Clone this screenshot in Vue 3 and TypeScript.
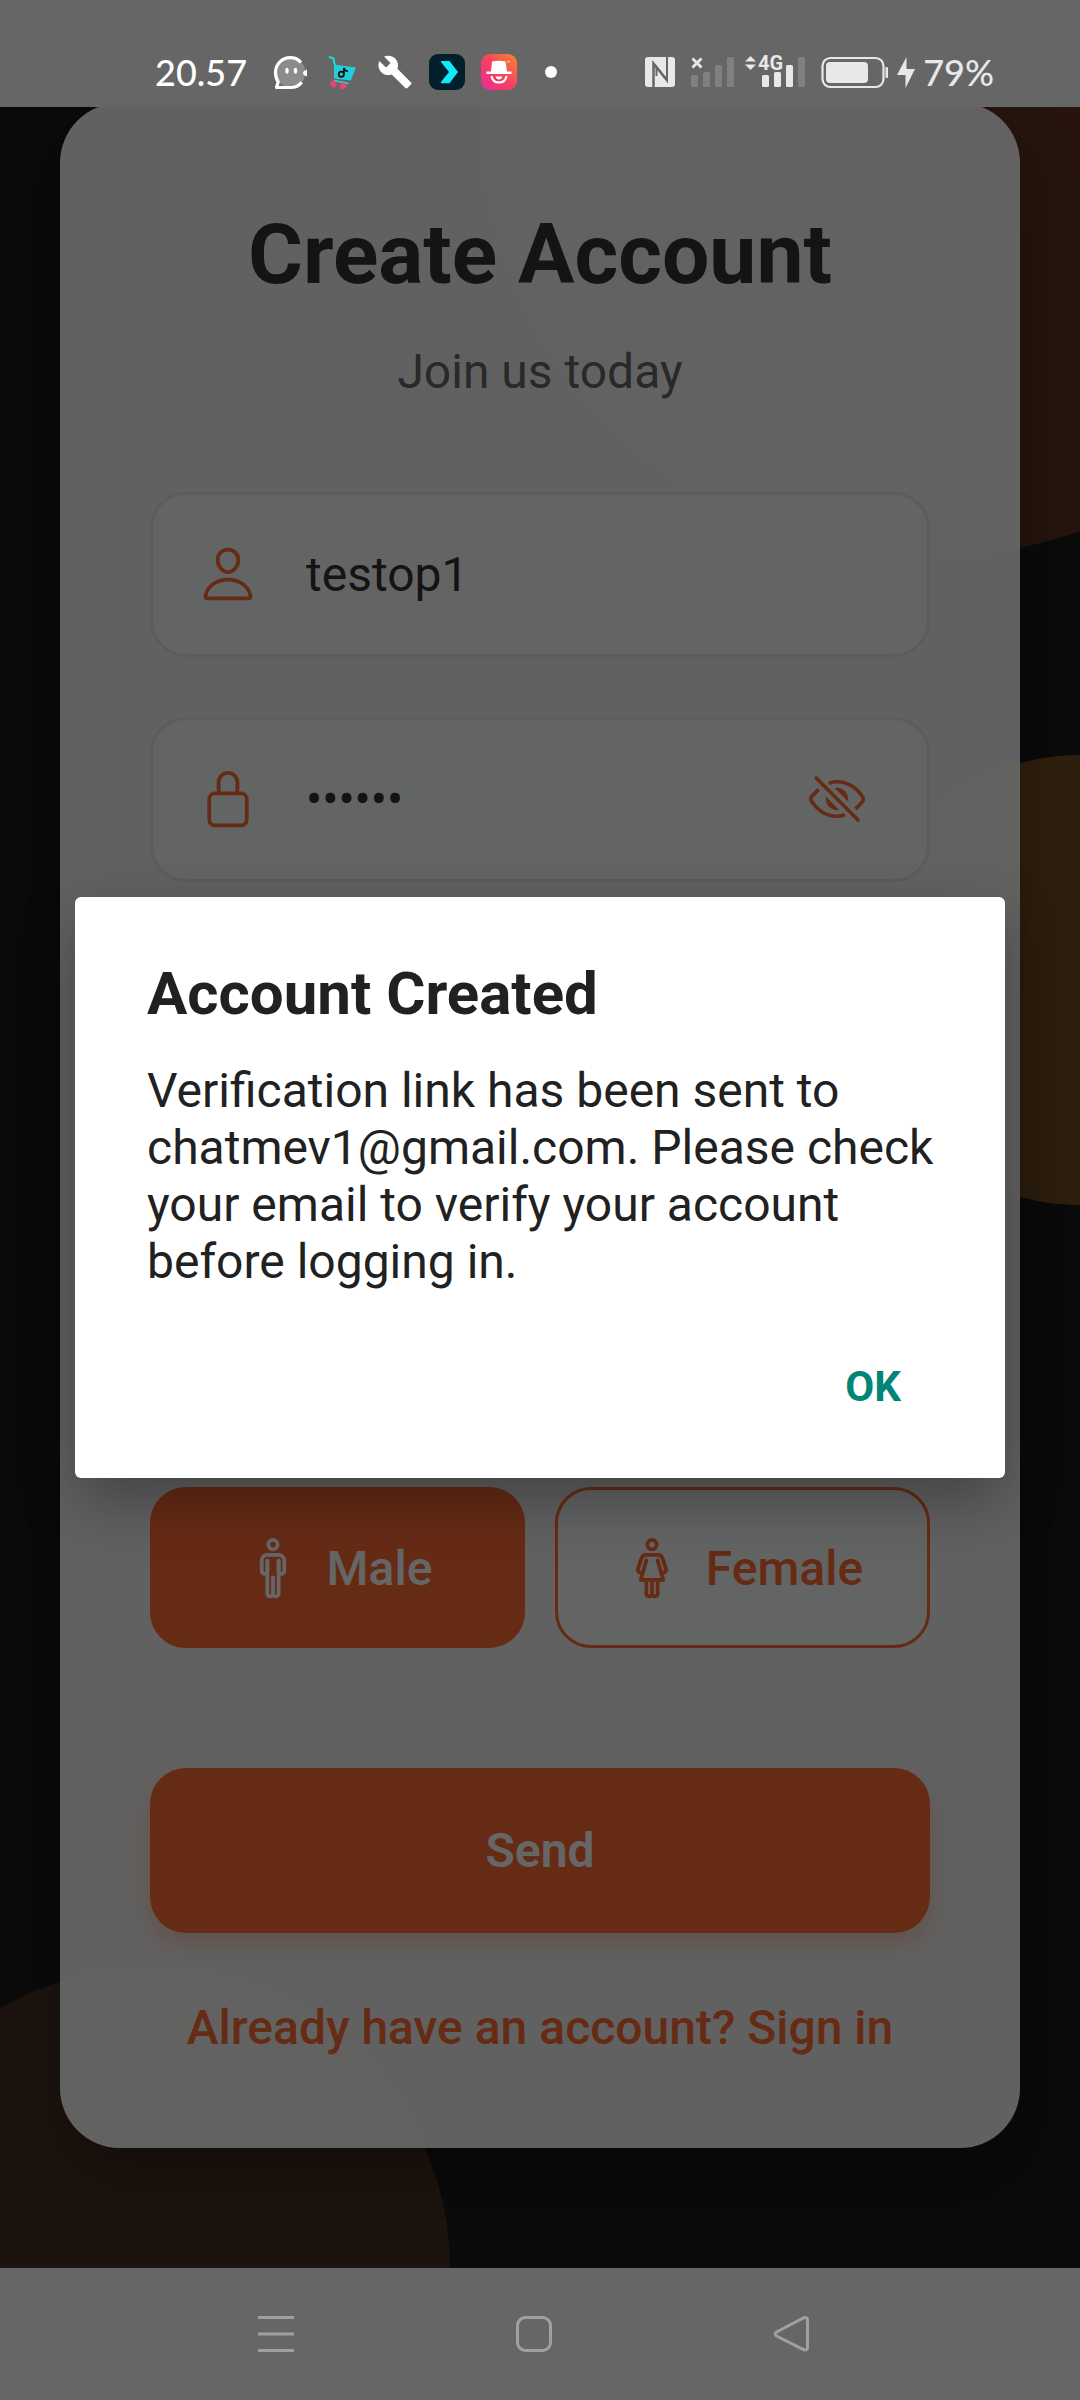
<script setup lang="ts">
import { ref } from 'vue'

type Gender = 'male' | 'female'

const username = ref('testop1')
const password = ref('secret')
const showPassword = ref(false)
const gender = ref<Gender>('male')
const dialogOpen = ref(true)
const email = 'chatmev1@gmail.com'
</script>

<template>
  <div class="page">
    <header class="status">
      <div class="status-left">
        <span class="clock">20.57</span>
        <svg class="tray" viewBox="0 0 36 36" aria-hidden="true">
          <circle cx="17.500" cy="18.500" r="15" fill="#8c8c8c" />
          <path d="M28 8.500C25 5 21.500 3.700 17.500 3.700C8.500 3.700 2.500 10.500 2.500 18.500c0 4 1 7 2.700 9.500L3.500 33.500H18c4.500 0 8-1.800 10.700-5.300" fill="none" stroke="#fff" stroke-width="3.200" stroke-linejoin="round" />
          <ellipse cx="14" cy="16.700" rx="1.700" ry="3" fill="#fff" />
          <ellipse cx="22.500" cy="16.700" rx="1.700" ry="3" fill="#fff" />
          <path d="M34 15.500v7q-4-1.500-4-3.500t4-3.500z" fill="#fff" />
        </svg>
        <svg class="tray" viewBox="0 0 36 36" aria-hidden="true">
          <path d="M4 3l4.500 1.500L10 12v12" fill="none" stroke="#25d9e2" stroke-width="2" />
          <path d="M9 10.500l22 3-5.300 13L9 24.500z" fill="#1fcfd9" />
          <path d="M9 26.500l14.500 3" stroke="#25d9e2" stroke-width="1.500" />
          <circle cx="8.500" cy="30" r="3.200" fill="#f0436a" />
          <circle cx="18" cy="32" r="3.200" fill="#f0436a" />
          <circle cx="16.300" cy="20.300" r="2.600" fill="none" stroke="#111" stroke-width="1.800" />
          <path d="M18.900 20.500v-6.500q1 3 4 3.300" fill="none" stroke="#111" stroke-width="1.800" />
        </svg>
        <svg class="tray" viewBox="0 0 24 24" aria-hidden="true">
          <path fill="#fff" d="M22.700 19l-9.100-9.100c.9-2.300.4-5-1.500-6.900-2-2-5-2.400-7.400-1.300L9 6 6 9 1.600 4.700C.4 7.100.9 10.100 2.900 12.100c1.900 1.900 4.600 2.400 6.900 1.500l9.100 9.100c.4.4 1 .4 1.400 0l2.300-2.300c.5-.4.5-1.100.1-1.400z" />
        </svg>
        <svg class="tray" viewBox="0 0 36 36" aria-hidden="true">
          <rect width="36" height="36" rx="9" fill="#02202b" />
          <path d="M12 7h8.500L29 18l-8.500 11.300H12V28l8-10-8-10z" fill="#12e8fb" />
        </svg>
        <svg class="tray" viewBox="0 0 36 36" aria-hidden="true">
          <defs>
            <linearGradient id="appTile" x1="0" y1="1" x2="1" y2="0">
              <stop offset="0" stop-color="#ea2a9b" />
              <stop offset=".5" stop-color="#f4425f" />
              <stop offset="1" stop-color="#fa8a2c" />
            </linearGradient>
          </defs>
          <rect width="36" height="36" rx="9" fill="url(#appTile)" />
          <path d="M11 7.500q7-1.500 13.500 0L26 17.500h4.500v2.500H5.500v-2.500H10z" fill="#fff" />
          <path d="M10.500 22q1 6.500 7.500 6.500T25.500 22" fill="none" stroke="#fff" stroke-width="2" />
          <path d="M14.500 22.500h7q-1 3-3.500 3t-3.500-3z" fill="#fff" />
          <path d="M26.500 8l2-.8" stroke="#fff" stroke-width="1" />
        </svg>
        <svg class="tray" viewBox="0 0 36 36" aria-hidden="true">
          <circle cx="18" cy="18" r="6" fill="#fff" />
        </svg>
      </div>
      <div class="status-right">
        <svg width="38" height="36" viewBox="0 0 38 36" aria-hidden="true">
          <rect y="3" width="30" height="30" rx="3" fill="#e8e8e8" />
          <path d="M8.500 33V9.500l13 16" fill="none" stroke="#666" stroke-width="2.500" />
          <path d="M22 3v23.500L11.500 13v9" fill="none" stroke="#666" stroke-width="2" />
        </svg>
        <svg width="44" height="36" viewBox="0 0 44 36" aria-hidden="true">
          <g fill="#808080">
            <rect y="21" width="7" height="12" rx="1.500" />
            <rect x="12" y="18" width="7" height="15" rx="1.500" />
            <rect x="24" y="11" width="7" height="22" rx="1.500" />
            <rect x="36" y="3" width="7" height="30" rx="1.500" />
          </g>
          <path d="M1.500 4.500l9 9m0-9l-9 9" stroke="#e8e8e8" stroke-width="2.800" />
        </svg>
        <svg class="mobile" width="70" height="36" viewBox="0 0 70 36" aria-hidden="true">
          <g fill="#e8e8e8">
            <rect x="19" y="21" width="7" height="12" rx="1.500" />
            <rect x="31" y="18" width="7" height="15" rx="1.500" />
            <rect x="43" y="11" width="7" height="22" rx="1.500" />
            <path d="M7.500 2l5.500 5.500H2zM7.500 16L2 10.500h11z" />
          </g>
          <rect x="55" y="3" width="7" height="30" rx="1.500" fill="#808080" />
          <text x="15" y="16" class="network">4G</text>
        </svg>
        <svg width="68" height="36" viewBox="0 0 68 36" aria-hidden="true">
          <rect x="1.500" y="4" width="61" height="29" rx="8" fill="none" stroke="#e8e8e8" stroke-width="2.200" />
          <rect x="5" y="8" width="42" height="21" rx="4" fill="#e8e8e8" />
          <rect x="64.500" y="13" width="2.500" height="11" rx="1" fill="#e8e8e8" />
        </svg>
        <svg width="18" height="36" viewBox="0 0 18 36" aria-hidden="true">
          <path d="M9.500 3v12H18L8.500 34V21H0z" fill="#e8e8e8" />
        </svg>
        <span class="charge">79%</span>
      </div>
    </header>

    <main class="screen">
      <div class="blob blob-top"></div>
      <div class="blob blob-side"></div>
      <div class="blob blob-bottom"></div>

      <form class="card" @submit.prevent="dialogOpen = true">
        <h1 class="title">Create Account</h1>
        <p class="subtitle">Join us today</p>

        <div class="fields">
          <label class="field">
            <svg class="icon" viewBox="0 0 512 512" aria-hidden="true">
              <path d="M344 144c-3.920 52.870-44 96-88 96s-84.150-43.120-88-96c-4-55 35-96 88-96s92 42 88 96z" />
              <path d="M256 304c-87 0-175.300 48-191.640 138.600C62.390 453.520 68.570 464 80 464h352c11.440 0 17.620-10.480 15.650-21.400C431.300 352 343 304 256 304z" />
            </svg>
            <input v-model="username" class="input" type="text" aria-label="Username" />
          </label>
          <div class="field">
            <svg class="icon" viewBox="0 0 512 512" aria-hidden="true">
              <path d="M336 208v-95a80 80 0 00-160 0v95" />
              <rect x="96" y="208" width="320" height="272" rx="48" />
            </svg>
            <input v-model="password" class="input" :type="showPassword ? 'text' : 'password'" aria-label="Password" />
            <button class="eye" type="button" aria-label="Toggle password visibility" @click="showPassword = !showPassword">
              <svg viewBox="0 0 60 60" aria-hidden="true">
                <g fill="none" stroke="#ff6b35" stroke-width="3.600">
                  <path d="M9.300 9l41.700 42" stroke-linecap="round" />
                  <path d="M21.700 14.300Q25.500 12.800 29.700 12.800C41 12.800 49.500 19 55.500 27.500Q57.300 30 55.500 32.500Q52.500 36.500 48.300 40" />
                  <path d="M11.800 20.500Q7.500 24 4.500 27.800Q3 30 4.500 32.200C11 41.500 19.500 47.200 29.700 47.200Q34 47.200 38 45.700" />
                </g>
                <path d="M27.700 19A11.300 11.300 0 0 1 41 32.500zM19 27.500A11.300 11.300 0 0 0 32.300 41z" fill="#ff6b35" />
              </svg>
            </button>
          </div>
        </div>

        <div class="genders">
          <button type="button" class="gender" :class="{ active: gender === 'male' }" :aria-pressed="gender === 'male'" @click="gender = 'male'">
            <svg class="icon" viewBox="0 0 512 512" aria-hidden="true">
              <circle cx="256" cy="56" r="40" />
              <path d="M208 192v283a21 21 0 0 0 48 0V336M304 192v283a21 21 0 0 1-48 0" />
              <path d="M208 192v90a24 24 0 0 1-48 0V192a48 48 0 0 1 48-48h96a48 48 0 0 1 48 48v90a24 24 0 0 1-48 0v-90" />
            </svg>
            <span>Male</span>
          </button>
          <button type="button" class="gender" :class="{ active: gender === 'female' }" :aria-pressed="gender === 'female'" @click="gender = 'female'">
            <svg class="icon" viewBox="0 0 512 512" aria-hidden="true">
              <circle cx="256" cy="56" r="40" />
              <path d="M208 192l-48 165h192l-48-165" />
              <path d="M180 288c-10 12-50 8-44-20l28-90q10-34 44-34h96q34 0 44 34l28 90c6 28-34 32-44 20" />
              <path d="M208 357v118a21 21 0 0 0 48 0V357M304 357v118a21 21 0 0 1-48 0" />
            </svg>
            <span>Female</span>
          </button>
        </div>

        <button class="send" type="submit">Send</button>
        <a class="signin" href="#signin">Already have an account? Sign in</a>
      </form>

      <div v-if="dialogOpen" class="scrim">
        <section class="dialog" role="alertdialog" aria-modal="true" aria-labelledby="dialog-title" aria-describedby="dialog-text">
          <h2 id="dialog-title" class="dialog-title">Account Created</h2>
          <p id="dialog-text" class="dialog-text">
            Verification link has been sent to {{ email }}. Please check your email to verify your account before logging in.
          </p>
          <div class="dialog-actions">
            <button class="ok" type="button" @click="dialogOpen = false">OK</button>
          </div>
        </section>
      </div>
    </main>

    <nav class="navbar" aria-label="System navigation">
      <button class="nav-btn" type="button" aria-label="Recent apps">
        <svg viewBox="0 0 36 36" aria-hidden="true"><path d="M0 1.500h36M0 18h36M0 34.500h36" /></svg>
      </button>
      <button class="nav-btn" type="button" aria-label="Home">
        <svg viewBox="0 0 36 36" aria-hidden="true"><rect x="1.500" y="1.500" width="33" height="33" rx="8" /></svg>
      </button>
      <button class="nav-btn" type="button" aria-label="Back">
        <svg viewBox="0 0 36 36" aria-hidden="true"><path d="M2.500 16L29.500 1.800Q33.500 0.500 33.500 4V31.500Q33.500 35 29.500 33.500L2.500 20Q0 18 2.500 16z" /></svg>
      </button>
    </nav>
  </div>
</template>

<style>
body {
  background: #666;
}
</style>

<style scoped>
.page {
  display: flex;
  flex-direction: column;
  min-height: 100vh;
  font-family: Roboto, "Liberation Sans", sans-serif;
}

button,
input {
  padding: 0;
  border: 0;
  background: none;
  font: inherit;
  color: inherit;
}

svg {
  display: block;
}

/* System status bar */
.status {
  display: flex;
  justify-content: space-between;
  padding: 54px 86px 17px 155px;
  background: #666;
  font-family: Lato, "Open Sans", sans-serif;
  font-size: 36px;
  font-weight: 500;
  line-height: 36px;
}

.status-left,
.status-right {
  display: flex;
  align-items: center;
}

.status-left {
  gap: 16px;
  color: #fff;
}

.clock {
  margin-right: 10px;
}

.status-right {
  gap: 8px;
  color: #e8e8e8;
}

.tray {
  width: 36px;
  height: 36px;
}

.mobile {
  overflow: visible;
}

.network {
  fill: #e8e8e8;
  font-family: Roboto, sans-serif;
  font-size: 20px;
  font-weight: 700;
}

/* Sign-up screen */
.screen {
  position: relative;
  flex: 1;
  padding: 0 60px 120px;
  overflow: hidden;
  background: #1a1a1a;
}

.blob {
  position: absolute;
  border-radius: 50%;
}

.blob-top {
  top: -450px;
  right: -300px;
  width: 900px;
  height: 900px;
  background: rgba(255, 107, 53, 0.3);
}

.blob-side {
  top: 30%;
  right: -225px;
  width: 450px;
  height: 450px;
  background: rgba(255, 161, 47, 0.4);
}

.blob-bottom {
  bottom: -300px;
  left: -150px;
  width: 600px;
  height: 600px;
  background: rgba(255, 144, 80, 0.2);
}

.card {
  position: relative;
  display: flex;
  flex-direction: column;
  margin-top: -4px;
  padding: 103px 90px 92px;
  border-radius: 60px;
  background: rgba(255, 255, 255, 0.95);
  box-shadow: 0 30px 60px rgba(0, 0, 0, 0.3);
}

.title {
  margin: 0 0 39px;
  color: #333;
  font-size: 84px;
  font-weight: 700;
  line-height: 98px;
  text-align: center;
}

.subtitle {
  margin: 0 0 92px;
  color: #666;
  font-size: 48px;
  line-height: 57px;
  text-align: center;
}

.fields {
  display: flex;
  flex-direction: column;
  gap: 60px;
}

.field {
  display: flex;
  align-items: center;
  padding: 49px 60px 50px 45px;
  border: 3px solid #e6e6e6;
  border-radius: 36px;
  background: #f7fbf9;
}

.icon {
  flex: none;
  width: 60px;
  height: 60px;
  overflow: visible;
  fill: none;
  stroke: #ff6b35;
  stroke-width: 32px;
  stroke-linecap: round;
  stroke-linejoin: round;
}

.input {
  flex: 1;
  min-width: 0;
  height: 57px;
  margin-left: 48px;
  outline: none;
  color: #333;
  font-size: 48px;
}

.eye {
  width: 60px;
  height: 60px;
}

.genders {
  display: flex;
  gap: 30px;
  margin: 605px 0 120px;
}

.gender {
  display: flex;
  flex: 1;
  align-items: center;
  justify-content: center;
  gap: 24px;
  padding: 48px 0 47px;
  border: 3px solid #ff6b35;
  border-radius: 36px;
  background: #f7fbf9;
  color: #ff6b35;
  font-size: 48px;
  font-weight: 500;
  line-height: 57px;
}

.gender.active {
  background: #ff6b35;
  color: #fff;
}

.gender.active .icon {
  stroke: #fff;
}

.send {
  padding: 54px 0;
  border-radius: 36px;
  background: #ff6b35;
  box-shadow: 0 12px 24px rgba(255, 107, 53, 0.3);
  color: #fff;
  font-size: 48px;
  font-weight: 600;
  line-height: 57px;
}

.signin {
  margin-top: 66px;
  color: #ff6b35;
  font-size: 48px;
  font-weight: 500;
  line-height: 57px;
  text-align: center;
  text-decoration: none;
}

/* Confirmation dialog */
.scrim {
  position: absolute;
  inset: 0;
  display: flex;
  align-items: center;
  justify-content: center;
  padding: 0 75px;
  background: rgba(0, 0, 0, 0.6);
}

.dialog {
  flex: 1;
  padding: 62px 48px 66px 72px;
  border-radius: 6px;
  background: #fff;
  box-shadow: 0 24px 60px rgba(0, 0, 0, 0.3);
  color: #212121;
}

.dialog-title {
  margin: 0 0 33px;
  font-size: 60px;
  font-weight: 700;
  line-height: 70px;
}

.dialog-text {
  margin: 0 0 72px;
  font-size: 48px;
  line-height: 57px;
}

.dialog-actions {
  display: flex;
  justify-content: flex-end;
  padding-right: 56px;
}

.ok {
  color: #008577;
  font-size: 42px;
  font-weight: 700;
  line-height: 50px;
}

/* System navigation bar */
.navbar {
  display: flex;
  justify-content: space-between;
  padding: 48px 270px 48px 258px;
  background: #666;
}

.nav-btn {
  width: 36px;
  height: 36px;
}

.nav-btn svg {
  fill: none;
  stroke: #a0a0a0;
  stroke-width: 3px;
}
</style>
